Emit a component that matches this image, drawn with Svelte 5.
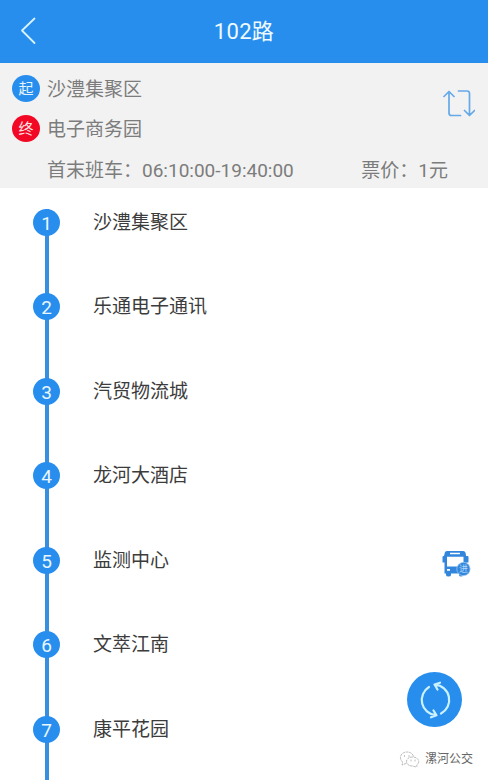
<script>
  const stops = ['沙澧集聚区', '乐通电子通讯', '汽贸物流城', '龙河大酒店', '监测中心', '文萃江南', '康平花园'];
  const busAt = 4;
</script>

<div class="app">
  <header>
    <svg class="back" width="18" height="28" viewBox="0 0 18 28"><path d="M15.500 1.500 3 13.500l12.500 12.500" /></svg>
    <h1>102路</h1>
  </header>

  <section class="info">
    <div class="ends">
      <div class="end"><span class="tag">起</span><span class="place">沙澧集聚区</span></div>
      <div class="end"><span class="tag last">终</span><span class="place">电子商务园</span></div>
    </div>
    <svg class="swap" width="32" height="30" viewBox="0 0 32 30">
      <path d="M1 7.500 6 2.500 11 7.500M6 3v21q0 2.500 2.500 2.500h9M15.500 2h8.500q2.500 0 2.500 2.500v21.500M21.500 21.500 26.500 26.500l5-5" />
    </svg>
    <div class="times"><span>首末班车：06:10:00-19:40:00</span><span class="fare">票价：1元</span></div>
  </section>

  <ol>
    {#each stops as stop, i}
      <li>
        <span class="num">{i + 1}</span>
        <span class="name">{stop}</span>
        {#if i === busAt}
          <svg class="bus" width="29" height="28" viewBox="0 0 29 28">
            <path class="solid" fill-rule="evenodd" d="M5 1h16q2.500 0 2.800 3l.3 2h1.400q1 0 1 1v5.500h-2v11H21v1.500q0 1.500-2 1.500t-2-1.500V23.500H9V25q0 1.500-2.500 1.500T4 25v-1.500H2.500v-11H.5V7q0-1 1-1H2l.5-2Q2.800 1 5 1ZM8 2.800v1.400h10V2.800ZM5 6.800v9.700h16.500V6.800ZM5 19v1.700h3V19Z" />
            <circle cx="21.500" cy="19" r="6.700" />
            <text x="21.500" y="22.300">进</text>
          </svg>
        {/if}
      </li>
    {/each}
  </ol>

  <button class="refresh" aria-label="刷新">
    <svg width="55" height="55" viewBox="0 0 55 55">
      <path d="M22 15A15.300 15.300 0 0 0 28.500 43.200M26.500 38.500l3 4.800-5.500 2M34 41.500A15.300 15.300 0 0 0 28 12.700M30.500 17.500l-3-5 5.500-1.800" />
    </svg>
  </button>

  <div class="mark">
    <svg width="21" height="17" viewBox="0 0 21 17">
      <path d="M7 12.500 3 14l.7-3C-1 7 2 1 8 1c4 0 6.500 2.500 6.500 5M13.500 6c-8 0-8 9 0 9l3 .8 1.500-.3-.3-1.500C22 11 19 6 13.500 6Z" />
      <path d="M5.500 4.500v1M10 4.500v1M12 9v1M16 9v1" />
    </svg>
    <span>漯河公交</span>
  </div>
</div>

<style>
  :global(body) { background: #fff; }
  .app {
    position: relative;
    height: 780px;
    overflow: hidden;
    background: #fff;
    font-family: Roboto, "Noto Sans CJK SC", sans-serif;
    font-size: 19px;
    line-height: 24px;
  }
  svg { fill: none; stroke-linecap: round; stroke-linejoin: round; }
  header {
    display: grid;
    grid-template-columns: 60px 1fr 60px;
    align-items: center;
    height: 63px;
    background: #288eee;
    color: #eefaff;
  }
  .back { margin: -2px 0 0 19px; stroke: #d8f3ff; stroke-width: 1.8; }
  h1 { margin: 0; text-align: center; font-size: 22px; font-weight: 400; line-height: 30px; letter-spacing: .3px; }
  .info {
    display: grid;
    grid-template-columns: 1fr 32px;
    grid-template-rows: 80px 40px;
    box-sizing: border-box;
    height: 125px;
    padding: 5px 13px 0 12px;
    background: #f2f2f2;
    color: #7c7c7c;
  }
  .end { display: flex; align-items: center; gap: 7px; height: 40px; }
  .place { padding-top: 3px; }
  .tag {
    width: 28px;
    height: 27px;
    border-radius: 50%;
    background: #288eee;
    color: #e4f5ff;
    font-size: 15px;
    line-height: 28px;
    text-align: center;
  }
  .last { background: #f20824; color: #ffe4e4; }
  .swap { margin-top: 21px; stroke: #65a9e9; stroke-width: 1.7; }
  .times { grid-column: 1 / 3; display: flex; justify-content: space-between; padding: 11px 27px 0 35px; }
  ol { margin: 0; padding: 20.500px 17px 0 33px; list-style: none; }
  li {
    display: flex;
    align-items: flex-start;
    height: 84.500px;
    background: linear-gradient(#388fe0, #388fe0) 11.500px 0 / 4px 100% no-repeat;
  }
  .num {
    width: 27px;
    height: 27px;
    border-radius: 50%;
    background: #288eee;
    color: #e8f7ff;
    line-height: 29.500px;
    text-align: center;
  }
  .name { flex: 1; margin-left: 33px; line-height: 28px; color: #3c3c3c; }
  .bus { margin-top: 3px; }
  .solid, .bus circle { fill: #3287dc; }
  .bus circle { stroke: #b9d8f6; stroke-width: .6; }
  .bus text { fill: #b5d8fa; font-size: 9px; text-anchor: middle; }
  .refresh {
    position: absolute;
    left: 407px;
    top: 672px;
    width: 55px;
    height: 55px;
    padding: 0;
    border: 0;
    border-radius: 50%;
    background: #288eee;
  }
  .refresh svg { display: block; stroke: #c9f1ff; stroke-width: 2.200; }
  .mark {
    position: absolute;
    left: 399px;
    top: 750px;
    display: flex;
    align-items: center;
    gap: 5px;
    color: #666;
    font-size: 12px;
    line-height: 18px;
  }
  .mark svg { stroke: #aaa; stroke-width: .8; stroke-dasharray: 2 1.500; }
</style>
